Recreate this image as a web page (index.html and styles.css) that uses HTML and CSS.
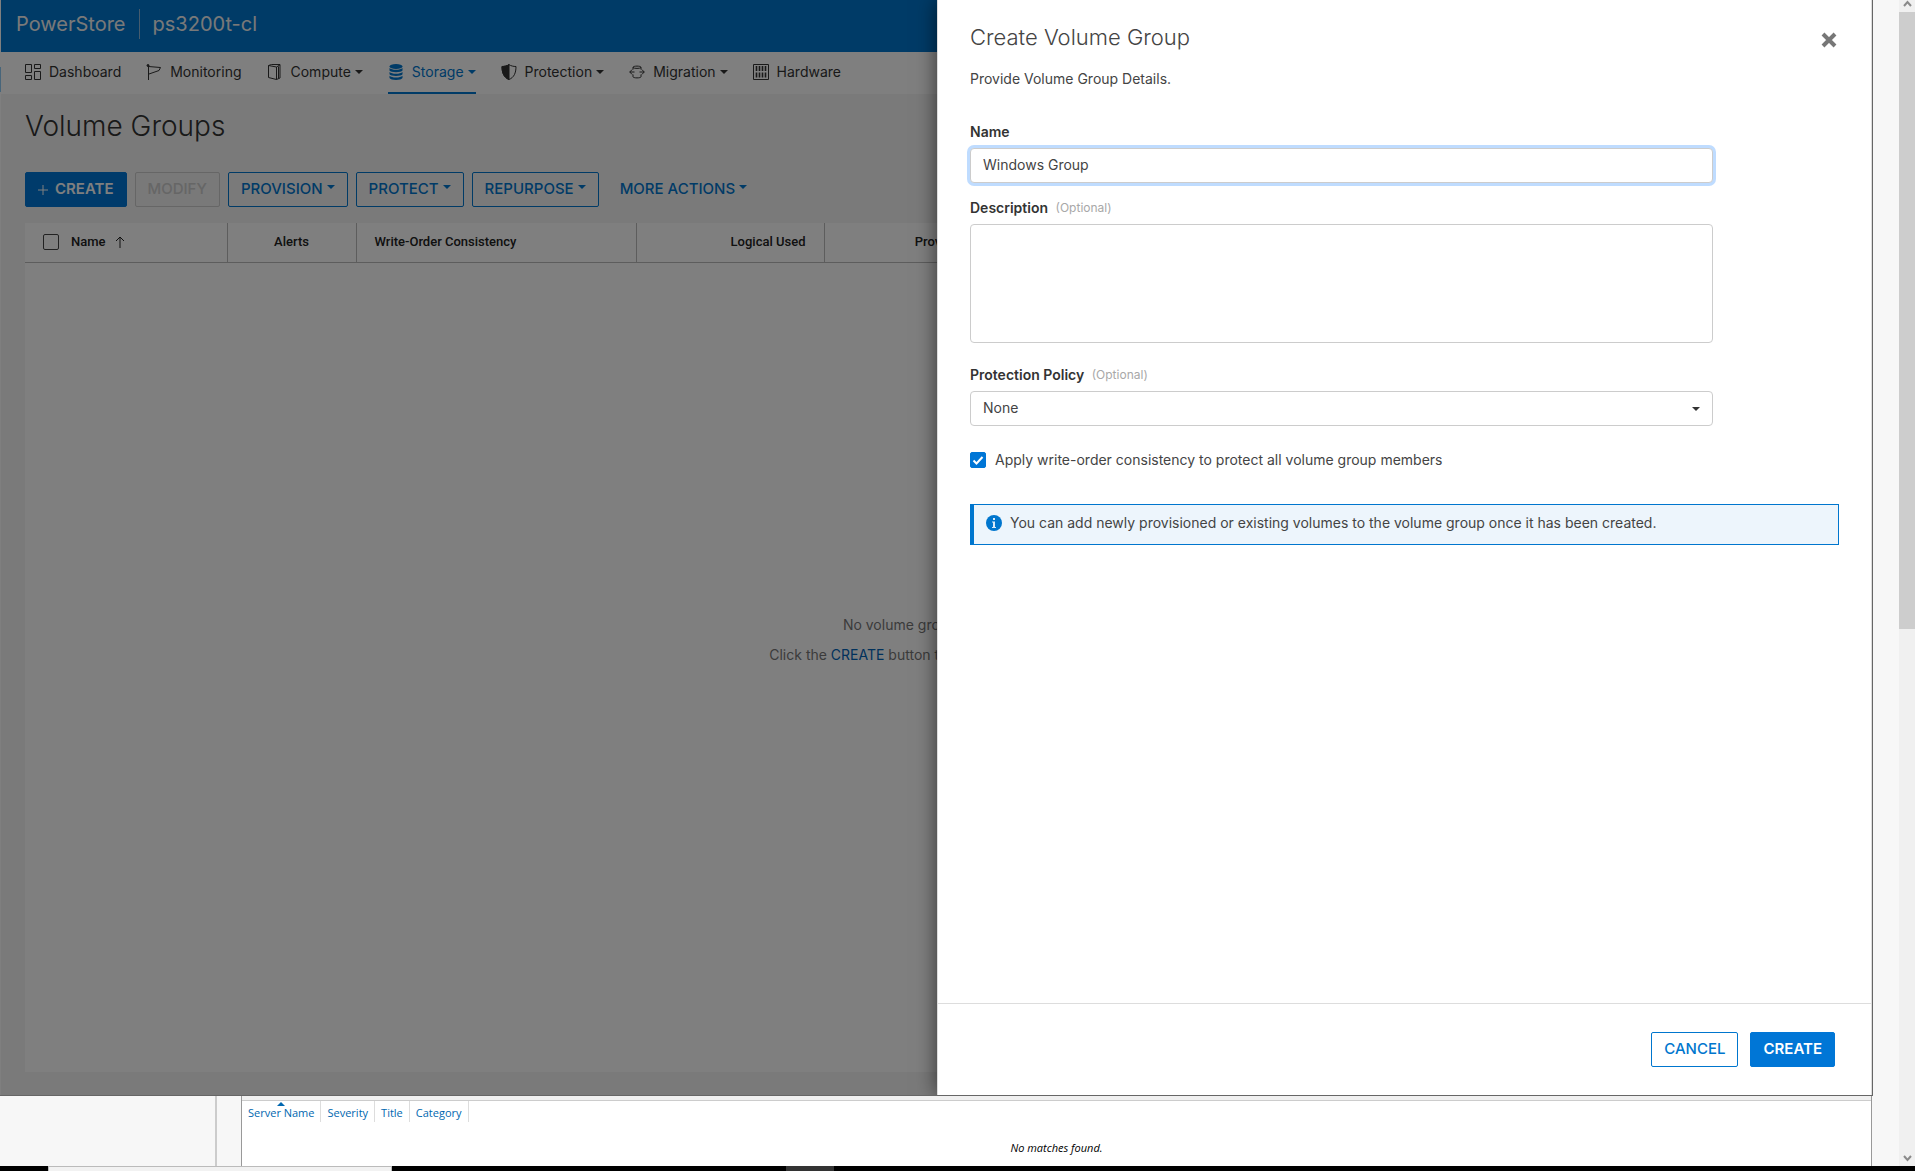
FILE: index.html
```html
<!DOCTYPE html>
<html lang="en">
<head>
<meta charset="utf-8">
<title>PowerStore - Volume Groups</title>
<link rel="stylesheet" href="styles.css">
</head>
<body>
<div class="desktop">
  <div class="workspace">
    <div class="main">
      <div class="app">
        <div class="page" inert>
          <header class="masthead">
            <span class="product">PowerStore</span>
            <span class="cluster">ps3200t-cl</span>
          </header>
          <nav class="nav">
            <a class="nav-item" href="#dashboard">
              <svg class="icon" viewBox="0 0 16 16" fill="none" stroke="currentColor"><path d="M.5.5h6v8h-6zM9.5.5h6v4h-6zM.5 11.500h6v4h-6zM9.500 7.500h6v8h-6z"/></svg>
              Dashboard</a>
            <a class="nav-item" href="#monitoring">
              <svg class="icon" viewBox="0 0 16 16" fill="none" stroke="currentColor"><circle cx="2" cy="1.500" r="1" fill="currentColor"/><path d="M2.500 1v15M2.500 2.500l12 1-1.500 3-10 3.500"/></svg>
              Monitoring</a>
            <a class="nav-item" href="#compute">
              <svg class="icon" viewBox="0 0 16 16" fill="none" stroke="currentColor"><path d="M1.500 1.500l8 1.500v12.500l-8-2zM1.500 1.500l3-1h8.500v13.500l-3.500 1.500M9.500 3L13 .8M11.500 2.500v12"/></svg>
              Compute<span class="caret"></span></a>
            <a class="nav-item nav-item-active" href="#storage">
              <svg class="icon" viewBox="0 0 16 16" fill="currentColor"><ellipse cx="8" cy="2.500" rx="6.500" ry="2.500"/><path d="M1.500 4c2 2.400 11 2.400 13 0v2.500c-1 2.300-12 2.300-13 0zM1.500 8c2 2.400 11 2.400 13 0v2.300c-1 2.300-12 2.300-13 0zM1.500 11.800c2 2.400 11 2.400 13 0V14c-1 2.600-12 2.600-13 0z"/></svg>
              Storage<span class="caret"></span></a>
            <a class="nav-item" href="#protection">
              <svg class="icon" viewBox="0 0 16 16" fill="none" stroke="currentColor"><path d="M8 .6C6 2 3.500 2.500 1 2.500c0 6.500 2 11 7 13 5-2 7-6.500 7-13-2.500 0-5-.5-7-1.900z"/><path d="M8 .6C6 2 3.500 2.500 1 2.500c0 6.500 2 11 7 13z" fill="currentColor"/></svg>
              Protection<span class="caret"></span></a>
            <a class="nav-item" href="#migration">
              <svg class="icon" viewBox="0 0 16 16" fill="none" stroke="currentColor"><path d="M4 5.500V3.300c0-1.600 8-1.600 8 0v2.200M4 10.500v2.200c0 1.600 8 1.600 8 0v-2.200M4 3.500c1 1.200 7 1.200 8 0M5.500 8H.8M3.200 5.500L.7 8l2.500 2.500M10.500 8h4.700M12.800 5.500L15.300 8l-2.500 2.500"/></svg>
              Migration<span class="caret"></span></a>
            <a class="nav-item" href="#hardware">
              <svg class="icon" viewBox="0 0 16 16" fill="none" stroke="currentColor"><path d="M.5.5h15v15H.5z"/><path d="M3.500 2v5M6.500 2v5M9.500 2v5M12.500 2v5M3.500 8.500v5M6.500 8.500v5M9.500 8.500v5M12.500 8.500v5" stroke-width="1.600"/></svg>
              Hardware</a>
          </nav>
          <main class="content">
            <h1 class="page-title">Volume Groups</h1>
            <div class="toolbar">
              <button class="btn btn-primary" type="button"><svg class="plus" viewBox="0 0 10 10" stroke="currentColor"><path d="M5 0v10M0 5h10"/></svg>CREATE</button>
              <button class="btn" type="button" disabled>MODIFY</button>
              <button class="btn" type="button">PROVISION<span class="caret caret-raised"></span></button>
              <button class="btn" type="button">PROTECT<span class="caret caret-raised"></span></button>
              <button class="btn" type="button">REPURPOSE<span class="caret caret-raised"></span></button>
              <button class="btn btn-flat" type="button">MORE ACTIONS<span class="caret caret-raised"></span></button>
            </div>
            <section class="grid">
              <table class="grid-table">
                <colgroup><col class="col-name"><col class="col-alerts"><col class="col-order"><col class="col-used"><col class="col-prov"><col></colgroup>
                <thead>
                  <tr>
                    <th scope="col"><div class="name-head"><input class="tick" type="checkbox" aria-label="Select all">Name<svg class="sort" viewBox="0 0 10 12" fill="none" stroke="currentColor"><path d="M5 12V1M1 5l4-4 4 4"/></svg></div></th>
                    <th scope="col" class="center">Alerts</th>
                    <th scope="col">Write-Order Consistency</th>
                    <th scope="col" class="right">Logical Used</th>
                    <th scope="col" class="right">Provisioned</th>
                    <th></th>
                  </tr>
                </thead>
              </table>
              <div class="empty">
                <p>No volume groups available.</p>
                <p>Click the <a href="#create">CREATE</a> button to create a volume group.</p>
              </div>
            </section>
          </main>
        </div>
        <div class="dim"></div>
        <form class="drawer">
          <div class="drawer-body">
            <div class="drawer-head">
              <h2 class="drawer-title">Create Volume Group</h2>
              <button class="close" type="button" aria-label="Close"><svg viewBox="0 0 16 16" fill="none" stroke="currentColor" stroke-width="4"><path d="M2 2l12 12M14 2L2 14"/></svg></button>
            </div>
            <p class="lead">Provide Volume Group Details.</p>
            <div class="field">
              <label class="label" for="name">Name</label>
              <input class="control control-focus" id="name" type="text" value="Windows Group">
            </div>
            <div class="field">
              <label class="label" for="desc">Description <span class="optional">(Optional)</span></label>
              <textarea class="control control-area" id="desc"></textarea>
            </div>
            <div class="field">
              <label class="label" for="policy">Protection Policy <span class="optional">(Optional)</span></label>
              <div class="select-wrap">
                <select class="control" id="policy"><option>None</option></select>
              </div>
            </div>
            <label class="check"><input class="tick tick-blue" type="checkbox" checked>Apply write-order consistency to protect all volume group members</label>
            <div class="info">
              <svg class="icon" viewBox="0 0 16 16"><circle cx="8" cy="8" r="8" fill="#0076ce"/><path d="M7 3h2v2H7zM6 6.500h3V12h1v1H6v-1h1V7.500H6z" fill="#d9eaf8"/></svg>
              You can add newly provisioned or existing volumes to the volume group once it has been created.
            </div>
          </div>
          <footer class="drawer-foot">
            <button class="btn" type="button">CANCEL</button>
            <button class="btn btn-primary" type="submit">CREATE</button>
          </footer>
        </form>
      </div>
      <div class="server">
        <div class="server-side"></div>
        <div class="server-panel">
          <table class="server-table">
            <thead><tr>
              <th scope="col" class="sorted">Server Name</th><th scope="col">Severity</th><th scope="col">Title</th><th scope="col">Category</th>
            </tr></thead>
          </table>
          <p class="no-match">No matches found.</p>
        </div>
      </div>
    </div>
    <div class="gutter"></div>
    <div class="scrollbar">
      <svg class="arrow" viewBox="0 0 16 12" fill="none" stroke="#8a8a8a" stroke-width="2"><path d="M5 6l3.500-4L12 6"/></svg>
      <div class="track"><div class="thumb"></div></div>
      <svg class="arrow" viewBox="0 0 16 12" fill="none" stroke="#8a8a8a" stroke-width="2"><path d="M5 2l3.500 4L12 2"/></svg>
    </div>
  </div>
  <div class="taskbar"><div class="task-search"></div><div class="task-app"></div></div>
</div>
</body>
</html>
```
FILE: styles.css
```css
* { box-sizing: border-box; }

body {
  margin: 0;
  font: 14px/20px Inter, "Liberation Sans", sans-serif;
  color: #444;
  background: #f7f7f7;
}

h1, h2, p { margin: 0; font-weight: 400; }
button, input, textarea, select { font: inherit; color: inherit; }
a { color: inherit; text-decoration: none; }

.desktop { display: flex; flex-direction: column; height: 100vh; overflow: hidden; }
.workspace { flex: 1; display: flex; min-height: 0; }
.main { flex: 1; min-width: 0; display: flex; flex-direction: column; }
.gutter { width: 26px; }

/* Browser window */
.app {
  flex: 1;
  min-height: 0;
  position: relative;
  display: flex;
  overflow: hidden;
  border: solid #666;
  border-width: 0 1px 1px 0;
  background: #fff;
}
.page { flex: 1; min-width: 0; display: flex; flex-direction: column; padding-left: 1px; background: linear-gradient(#fff 67px, #8ecbf5 67px, #8ecbf5 92px, #fff 92px); }
.dim { position: absolute; inset: 0; background: rgba(0, 0, 0, .5); }

.masthead { display: flex; align-items: center; height: 52px; padding: 0 15px 4px; background: #0076ce; color: #f2f2f2; font-size: 20px; line-height: 30px; }
.cluster { margin-left: 13px; padding-left: 13px; border-left: 1px solid #8cb8dd; }

.nav { display: flex; gap: 25px; height: 42px; padding: 0 24px; background: #fff; color: #333; }
.nav-item { display: flex; align-items: center; gap: 8px; border-bottom: 2px solid transparent; white-space: nowrap; }
.nav-item-active { color: #0076ce; border-color: #0076ce; }
.icon { flex: none; width: 16px; height: 16px; }

.caret { flex: none; border: solid transparent; border-width: 4px 4px 0; border-top-color: currentColor; }
.nav-item .caret { margin-left: -4px; }
.caret-raised { margin-left: 4px; margin-bottom: 4px; }

.content { flex: 1; display: flex; flex-direction: column; padding: 14px 24px 23px; background: #f5f5f5; }
.page-title { font-size: 28px; font-weight: 300; line-height: 36px; color: #333; }
.toolbar { display: flex; gap: 8px; margin: 28px 0 16px; }

.btn {
  display: flex;
  align-items: center;
  height: 35px;
  padding: 0 12px 2px;
  border: 1px solid #0076ce;
  border-radius: 2px;
  background: transparent;
  color: #0076ce;
  font-size: 15px;
  font-weight: 500;
  white-space: nowrap;
}
.btn-primary { background: #0076d6; border-color: #0076d6; color: #fff; font-weight: 600; }
.btn:disabled { border-color: #ccc; background: #f2f2f2; color: #ccc; }
.btn-flat { border-color: transparent; }
.plus { width: 10px; height: 10px; margin: 2px 7px 0 0; }

.grid { flex: 1; display: flex; flex-direction: column; background: #fff; }
.grid-table { width: 100%; table-layout: fixed; border-collapse: collapse; font: 500 13px/20px Roboto, sans-serif; color: #222; }
.grid-table th { height: 39px; padding: 0 18px; border: solid #bbb; border-width: 0 1px 1px 0; font-weight: 500; text-align: left; white-space: nowrap; }
.grid-table .center { text-align: center; }
.grid-table .right { text-align: right; }
.col-name { width: 202px; }
.col-alerts { width: 129px; }
.col-order { width: 280px; }
.col-used { width: 188px; }
.col-prov { width: 178px; }
.name-head { display: flex; align-items: center; }
.name-head .tick { margin-right: 12px; }
.sort { width: 10px; height: 12px; margin-left: 9px; }

.tick { appearance: none; flex: none; width: 16px; height: 16px; margin: 0; border: 1px solid #444; border-radius: 2px; }
.tick-blue:checked {
  border-color: #0076d6;
  background: #0076d6 url("data:image/svg+xml,%3Csvg xmlns='http://www.w3.org/2000/svg' viewBox='0 0 14 14'%3E%3Cpath d='M2.500 7.500l3 3 6-6.500' fill='none' stroke='%23fff' stroke-width='2'/%3E%3C/svg%3E") center / 14px 14px no-repeat;
}

.empty { flex: 1; display: flex; flex-direction: column; justify-content: center; align-items: center; gap: 10px; padding-bottom: 54px; color: #777; }
.empty a { color: #0063b8; }

/* Drawer */
.drawer {
  position: absolute;
  inset: 0 0 0 auto;
  width: calc(50% - 1px);
  display: flex;
  flex-direction: column;
  border: solid #ddd;
  border-width: 0 1px;
  background: #fff;
  box-shadow: 0 0 20px rgba(0, 0, 0, .6);
}
.drawer-body { flex: 1; padding: 21px 32px 0; }
.drawer-head { display: flex; justify-content: space-between; align-items: center; }
.drawer-title { font-size: 22px; font-weight: 300; line-height: 32px; }
.close { width: 16px; height: 16px; margin: 6px 2px 0 0; padding: 0; border: 0; background: none; color: #777; }
.close svg { display: block; }
.lead { margin: 16px 0 33px; }

.field { display: flex; flex-direction: column; gap: 6px; width: 85.5%; margin-bottom: 15px; }
.label { font-weight: 600; line-height: 20px; color: #333; }
.optional { margin-left: 4px; font-size: 12px; font-weight: 400; color: #a8a8a8; vertical-align: 1px; line-height: 16px; }
.control { display: block; width: 100%; height: 35px; margin: 0; padding: 0 12px 2px; border: 1px solid #ccc; border-radius: 4px; background: #fff; outline: 0; }
.control-focus { box-shadow: 0 0 0 3px #bfdcff; }
.control-area { height: 119px; margin-bottom: 7px; resize: none; }
.select-wrap { position: relative; }
.select-wrap .control { appearance: none; }
.select-wrap::after { content: ""; position: absolute; right: 13px; top: 16px; border: solid transparent; border-width: 4px 4px 0; border-top-color: #333; }

.check { display: flex; align-items: center; gap: 9px; margin-top: 24px; }
.info { display: flex; align-items: center; gap: 8px; height: 41px; margin-top: 34px; padding: 0 12px 3px; border: 1px solid #0076ce; border-left-width: 4px; background: #edf5fc; white-space: nowrap; }

.drawer-foot { display: flex; justify-content: flex-end; gap: 12px; padding: 28px 36px; border-top: 1px solid #ddd; }

/* Server window underneath */
.server { flex: none; display: flex; height: 70px; background: #f7f7f7; }
.server-side { flex: none; width: 217px; margin-right: 24px; border-right: 2px solid #ccc; }
.server-panel { flex: 1; margin-right: 1px; border: solid #999; border-width: 0 1px; background: linear-gradient(#f0f0f0 4px, #ccc 4px, #ccc 5px, #fff 5px); padding-top: 5px; font: 11px/15px "Open Sans", sans-serif; color: #000; }
.server-table { border-collapse: collapse; color: #0067b0; }
.server-table th { padding: 4px 6px 2px; border-right: 1px solid #ddd; font-weight: 400; }
.sorted { position: relative; }
.sorted::before { content: ""; position: absolute; left: 50%; top: 1px; margin-left: -4px; border: solid transparent; border-width: 0 4px 4px; border-bottom-color: #0067b0; }
.no-match { margin-top: 18px; text-align: center; font-style: italic; }

/* Outer scroll bar and task bar */
.scrollbar { flex: none; width: 16px; display: flex; flex-direction: column; background: #f0f0f0; }
.arrow { flex: none; width: 16px; height: 12px; }
.track { flex: 1; }
.thumb { height: 54%; background: #cdcdcd; }
.taskbar { flex: none; display: flex; height: 5px; background: #000; }
.task-search { width: 344px; margin-left: 48px; border: 1px solid #bbb; border-bottom: 0; background: #f2f2f2; }
.task-app { width: 48px; margin-left: 394px; background: #333; }
```
